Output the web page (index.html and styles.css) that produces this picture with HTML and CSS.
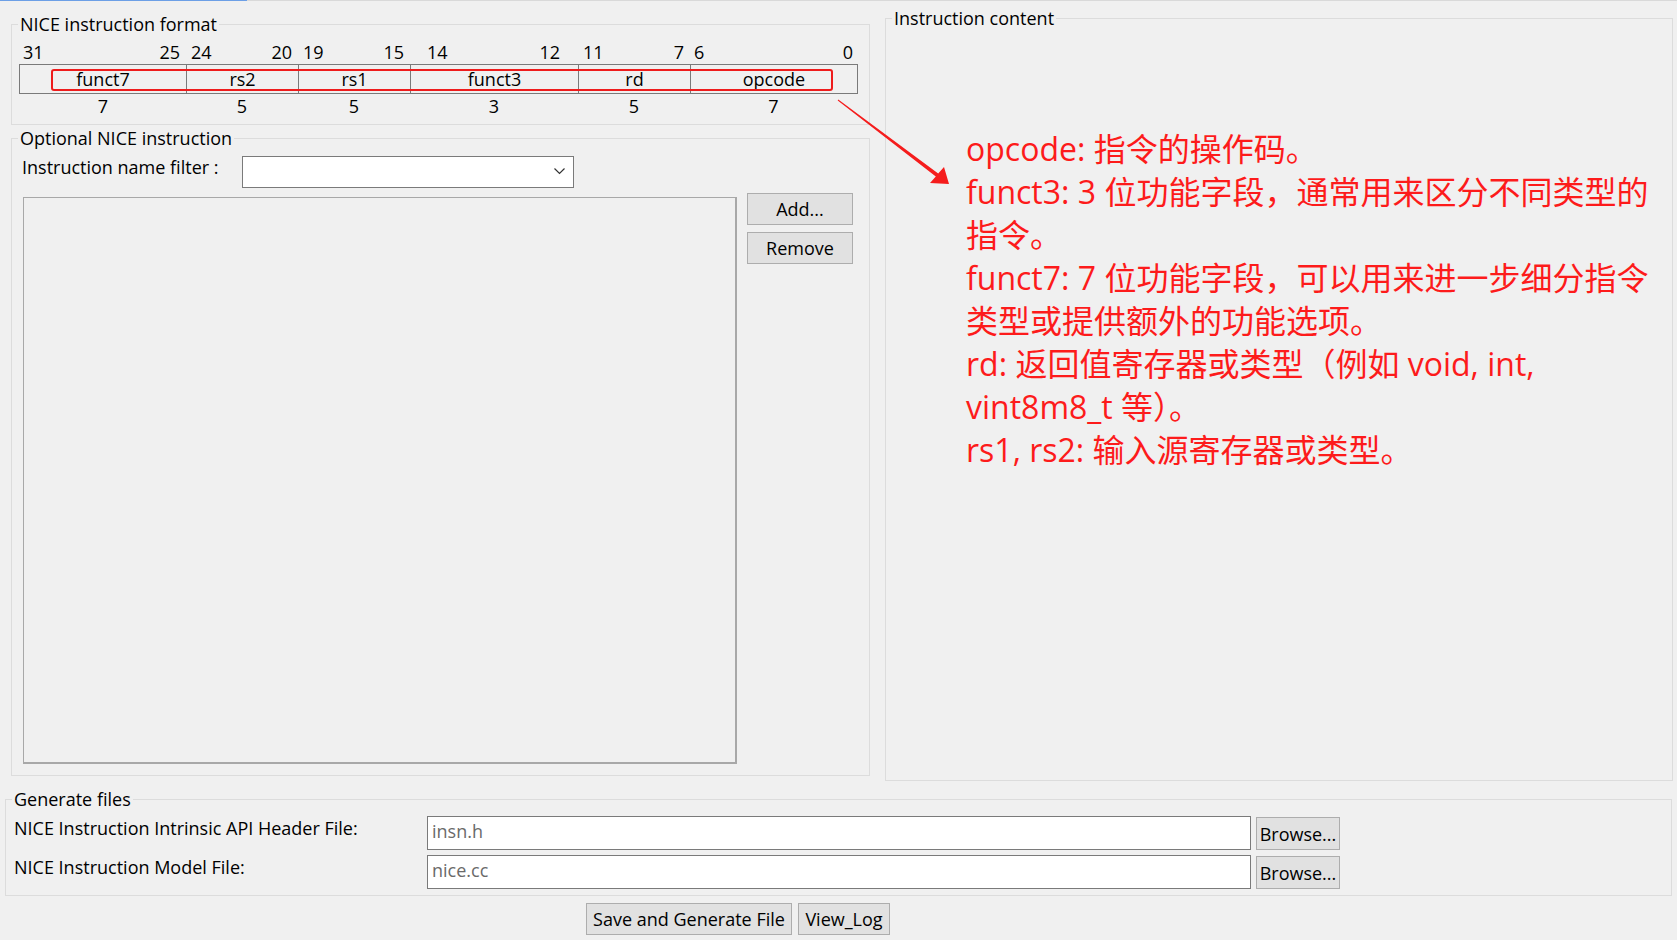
FILE: index.html
```html
<!DOCTYPE html>
<html lang="zh-CN">
<head>
<meta charset="utf-8">
<title>NICE Instruction</title>
<link rel="stylesheet" href="styles.css">
</head>
<body>
<div class="topbar"></div>
<div class="main">
  <div class="leftcol">
    <fieldset class="group fmt">
      <legend>NICE instruction format</legend>
      <div class="bits">
        <div class="bc b1"><span>31</span><span>25</span></div>
        <div class="bc b2"><span>24</span><span>20</span></div>
        <div class="bc b3"><span>19</span><span>15</span></div>
        <div class="bc b4"><span>14</span><span>12</span></div>
        <div class="bc b5"><span>11</span><span>7</span></div>
        <div class="bc b6"><span>6</span><span>0</span></div>
      </div>
      <div class="fields">
        <div class="cell">funct7</div>
        <div class="cell">rs2</div>
        <div class="cell">rs1</div>
        <div class="cell">funct3</div>
        <div class="cell">rd</div>
        <div class="cell">opcode</div>
        <div class="hl"></div>
      </div>
      <div class="widths">
        <div>7</div><div>5</div><div>5</div><div>3</div><div>5</div><div>7</div>
      </div>
    </fieldset>
    <fieldset class="group opt">
      <legend>Optional NICE instruction</legend>
      <div class="filter-row">
        <label class="filter-label">Instruction name filter :</label>
        <div class="combo">
          <svg class="chev" width="11" height="7" viewBox="0 0 11 7"><polyline points="0.5,0.5 5.5,5.5 10.5,0.5" fill="none" stroke="#333" stroke-width="1.2"/></svg>
        </div>
      </div>
      <div class="list-row">
        <div class="listbox"></div>
        <div class="side-btns">
          <button class="btn">Add...</button>
          <button class="btn">Remove</button>
        </div>
      </div>
    </fieldset>
  </div>
  <fieldset class="group content">
    <legend>Instruction content</legend>
    <div class="notes">
      <div>opcode: 指令的操作码。</div>
      <div>funct3: 3 位功能字段，通常用来区分不同类型的<br>指令。</div>
      <div>funct7: 7 位功能字段，可以用来进一步细分指令<br>类型或提供额外的功能选项。</div>
      <div>rd: 返回值寄存器或类型（例如 void, int,<br>vint8m8_t 等）。</div>
      <div>rs1, rs2: 输入源寄存器或类型。</div>
    </div>
  </fieldset>
</div>
<fieldset class="group gen">
  <legend>Generate files</legend>
  <div class="gen-grid">
    <label class="gen-label">NICE Instruction Intrinsic API Header File:</label>
    <div class="tfield">insn.h</div>
    <button class="btn browse">Browse...</button>
    <label class="gen-label">NICE Instruction Model File:</label>
    <div class="tfield">nice.cc</div>
    <button class="btn browse">Browse...</button>
  </div>
</fieldset>
<div class="actions">
  <button class="btn save">Save and Generate File</button>
  <button class="btn log">View_Log</button>
</div>
<svg class="arrow" width="1677" height="940" viewBox="0 0 1677 940">
  <polygon points="838.3,99.6 938.2,173.4 944,167 949,184 930,183 935.8,176.6 837.7,100.4" fill="#f51c1c"/>
</svg>
</body>
</html>
```
FILE: styles.css
```css
html, body {
  margin: 0;
  padding: 0;
}
body {
  width: 1677px;
  height: 940px;
  overflow: hidden;
  background: #f0f0f0;
  font-family: "Open Sans", "Noto Sans CJK SC", sans-serif;
  font-size: 18px;
  line-height: 20px;
  color: #000;
  position: relative;
}
.topbar {
  height: 1px;
  background: linear-gradient(to right, #6c9fe6 0, #6c9fe6 247px, #d9d9d9 247px, #d9d9d9 100%);
}
.main {
  display: flex;
  align-items: flex-start;
  padding-left: 11px;
  gap: 15px;
}
.group {
  margin: 0;
  padding: 0;
  border: 1px solid #dcdcdc;
  box-sizing: border-box;
  min-width: 0;
}
.group > legend {
  margin-left: 6px;
  padding: 0 2px;
  font-size: 18px;
  line-height: 20px;
}
.leftcol {
  width: 859px;
  margin-top: 13px;
  display: flex;
  flex-direction: column;
}
.fmt {
  width: 859px;
  height: 111px;
}
.bits, .fields, .widths {
  margin-left: 7px;
  width: 839px;
  box-sizing: border-box;
  display: grid;
  grid-template-columns: 166px 112px 112px 168px 112px 167px;
}
.bits {
  margin-top: 8px;
  padding: 0 1px;
}
.bc {
  display: flex;
  justify-content: space-between;
}
.b1 { padding: 0 6px 0 3px; }
.b2 { padding: 0 6px 0 5px; }
.b3 { padding: 0 6px 0 5px; }
.b4 { padding: 0 18px 0 17px; }
.b5 { padding: 0 6px 0 5px; }
.b6 { padding: 0 4px 0 4px; }
.fields {
  margin-top: 2px;
  height: 30px;
  border: 1px solid #7a7a7a;
  position: relative;
}
.cell {
  text-align: center;
  line-height: 28px;
  border-left: 1px solid #7a7a7a;
}
.cell:first-child {
  border-left: none;
}
.hl {
  position: absolute;
  left: 31px;
  top: 4px;
  width: 782px;
  height: 22px;
  border: 2px solid #ee1c1c;
  border-radius: 3px;
  box-sizing: border-box;
}
.widths {
  margin-top: 2px;
  padding: 0 1px;
  text-align: center;
}
.opt {
  width: 859px;
  height: 648px;
  margin-top: 3px;
}
.filter-row {
  display: flex;
  align-items: flex-start;
  margin-top: 8px;
}
.filter-label {
  width: 230px;
  box-sizing: border-box;
  padding-left: 10px;
  margin-top: 1px;
}
.combo {
  width: 332px;
  height: 32px;
  box-sizing: border-box;
  border: 1px solid #7a7a7a;
  background: #fff;
  position: relative;
}
.chev {
  position: absolute;
  right: 8px;
  top: 11px;
}
.list-row {
  display: flex;
  align-items: flex-start;
  margin-top: 5px;
}
.listbox {
  margin-left: 11px;
  margin-top: 4px;
  width: 714px;
  height: 567px;
  box-sizing: border-box;
  border: 1px solid #a8a8a8;
  border-right-width: 2px;
  border-bottom-width: 2px;
  background: #f0f0f0;
}
.side-btns {
  margin-left: 10px;
  display: flex;
  flex-direction: column;
  gap: 7px;
}
.btn {
  font-family: "Open Sans", "Noto Sans CJK SC", sans-serif;
  font-size: 18px;
  line-height: 20px;
  color: #000;
  background: #e1e1e1;
  border: 1px solid #adadad;
  border-radius: 0;
  padding: 0;
  margin: 0;
  box-sizing: border-box;
}
.side-btns .btn {
  width: 106px;
  height: 32px;
}
.content {
  width: 788px;
  height: 773px;
  margin-top: 7px;
}
.notes {
  padding: 99px 0 0 80px;
  font-size: 32px;
  line-height: 43px;
  color: #fd1b1b;
  white-space: nowrap;
}
.gen {
  margin: 8px 0 0 5px;
  width: 1667px;
  height: 107px;
}
.gen-grid {
  display: grid;
  grid-template-columns: 408px 824px 84px;
  column-gap: 5px;
  row-gap: 5px;
  margin-top: 7px;
  padding-left: 8px;
  align-items: start;
}
.gen-label {
  margin-top: 2px;
}
.tfield {
  height: 34px;
  box-sizing: border-box;
  border: 1px solid #7a7a7a;
  background: #fff;
  padding: 4px 0 0 4px;
  color: #6a6a6a;
}
.browse {
  height: 33px;
  margin-top: 1px;
}
.actions {
  display: flex;
  gap: 6px;
  margin-top: 7px;
  padding-left: 586px;
}
.save {
  width: 206px;
  height: 32px;
}
.log {
  width: 92px;
  height: 32px;
}
.arrow {
  position: absolute;
  left: 0;
  top: 0;
  pointer-events: none;
}
```
